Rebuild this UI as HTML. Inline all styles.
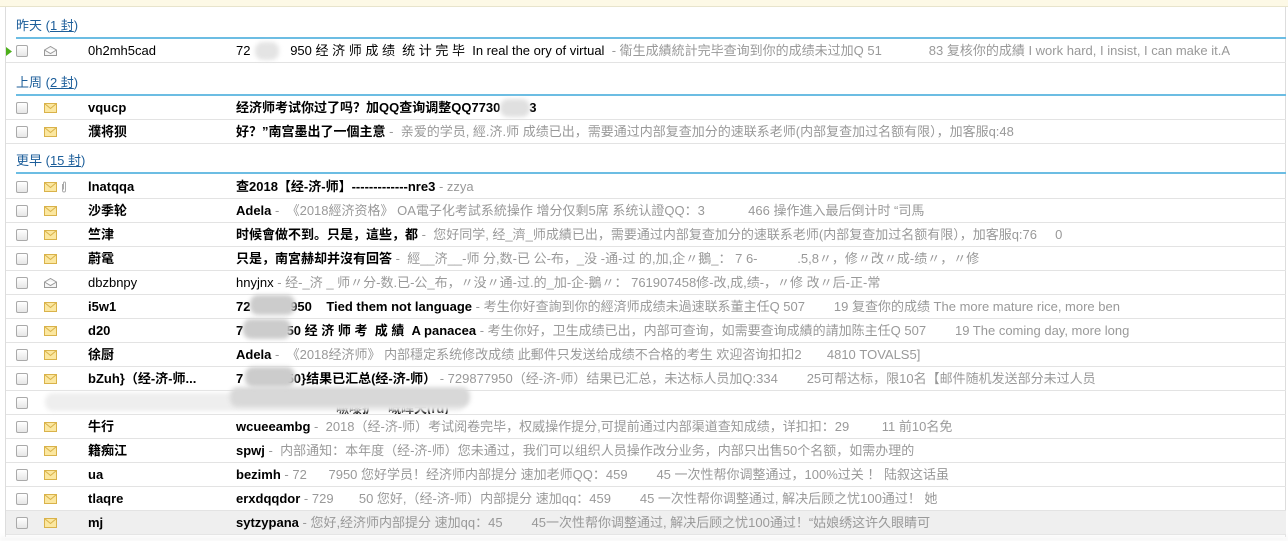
<!DOCTYPE html>
<html><head><meta charset="utf-8"><style>
*{margin:0;padding:0;box-sizing:border-box}
body{width:1288px;height:541px;background:#fff;font-family:"Liberation Sans","Noto Sans CJK SC",sans-serif;font-size:13px;color:#000;position:relative;overflow:hidden}
.top{position:absolute;left:0;top:0;width:1288px;height:7px;background:#fdf9e6;border-bottom:1px solid #e8e4cc}
.frame{position:absolute;left:5px;top:7px;width:1281px;height:530px;border-left:1px solid #ddd;border-right:1px solid #ddd}
.hdr{position:absolute;left:16px;width:1270px;height:24px;font-size:13px;color:#1c5e9a;border-bottom:2px solid #6cbde3;line-height:20px}
.hdr span{position:absolute;top:1px}
.hdr a{color:#1c5e9a;text-decoration:underline}
.row{position:absolute;left:6px;width:1280px;height:24px;border-bottom:1px solid #e3e3e3;white-space:nowrap;overflow:hidden;line-height:23px}
.row.sel{background:#efefef}
.cb{position:absolute;left:10px;top:6px;width:12px;height:12px;border:1px solid #aaa;border-radius:2px;background:linear-gradient(#fff,#e6e6e6)}
.env{position:absolute;left:38px;top:7px}
.from{position:absolute;left:82px;top:0}
.subj{position:absolute;left:230px;top:0}
.b{font-weight:bold}
.g{color:#999}
.blur{position:absolute;background:#ddd;border-radius:8px;filter:blur(2px)}
</style></head><body>
<div class="top"></div>
<div class="frame"></div>

<div class="hdr" style="top:15px"><span>昨天 (<a>1 封</a>)</span></div>
<div class="row" style="top:39px">
<svg style="position:absolute;left:0;top:8px" width="6" height="9"><path d="M0 0L6 4.5L0 9Z" fill="#4caf1a"/></svg>
<div class="cb"></div>
<svg class="env" width="13" height="10"><path d="M0.5 4L6.5 0.5L12.5 4V9.5H0.5Z M0.5 4L6.5 7.5L12.5 4" fill="#f6f6f6" stroke="#999"/></svg>
<span class="from">0h2mh5cad</span>
<span class="subj">72&nbsp;&nbsp;&nbsp;&nbsp;&nbsp;&nbsp;&nbsp;&nbsp;&nbsp;&nbsp;&nbsp;950 经 济 师 成 绩&nbsp; 统 计 完 毕&nbsp; In real the ory of virtual&nbsp; <span class="g">- 衛生成績統計完毕查询到你的成绩未过加Q 51&nbsp;&nbsp;&nbsp;&nbsp;&nbsp;&nbsp;&nbsp;&nbsp;&nbsp;&nbsp;&nbsp;&nbsp;&nbsp;83 复核你的成績 I work hard, I insist, I can make it.A</span></span>
</div>

<div class="hdr" style="top:72px"><span>上周 (<a>2 封</a>)</span></div>
<div class="row" style="top:96px"><div class="cb"></div><svg class="env" width="13" height="10"><rect x=".5" y=".5" width="12" height="9" fill="#fbe7a0" stroke="#d9b24a"/><path d="M.5 .5L6.5 5.5L12.5 .5" fill="none" stroke="#d9b24a"/></svg><span class="from b">vqucp</span><span class="subj b">经济师考试你过了吗？加QQ查询调整QQ7730&nbsp;&nbsp;&nbsp;&nbsp;&nbsp;&nbsp;&nbsp;&nbsp;3</span></div>
<div class="row" style="top:120px"><div class="cb"></div><svg class="env" width="13" height="10"><rect x=".5" y=".5" width="12" height="9" fill="#fbe7a0" stroke="#d9b24a"/><path d="M.5 .5L6.5 5.5L12.5 .5" fill="none" stroke="#d9b24a"/></svg><span class="from b">濮将狈</span><span class="subj"><b>好？”南宫墨出了一個主意</b> <span class="g">-&nbsp; 亲爱的学员, 經.济.师 成绩已出，需要通过内部复查加分的速联系老师(内部复查加过名额有限），加客服q:48</span></span></div>

<div class="hdr" style="top:150px"><span>更早 (<a>15 封</a>)</span></div>
<div class="row" style="top:175px"><div class="cb"></div><svg class="env" width="13" height="10"><rect x=".5" y=".5" width="12" height="9" fill="#fbe7a0" stroke="#d9b24a"/><path d="M.5 .5L6.5 5.5L12.5 .5" fill="none" stroke="#d9b24a"/></svg><svg style="position:absolute;left:55px;top:6px" width="6" height="12"><path d="M1.5 3V9.5A1.5 1.5 0 0 0 4.5 9.5V2A1 1 0 0 0 2.5 2V8.5" fill="none" stroke="#aaa"/></svg><span class="from b">lnatqqa</span><span class="subj"><b>查2018【经-济-师】-------------nre3</b> <span class="g">- zzya</span></span></div>
<div class="row" style="top:199px"><div class="cb"></div><svg class="env" width="13" height="10"><rect x=".5" y=".5" width="12" height="9" fill="#fbe7a0" stroke="#d9b24a"/><path d="M.5 .5L6.5 5.5L12.5 .5" fill="none" stroke="#d9b24a"/></svg><span class="from b">沙季轮</span><span class="subj"><b>Adela</b> <span class="g">-&nbsp; 《2018經济资格》 OA電子化考試系統操作 增分仅剩5席 系统认證QQ：3&nbsp;&nbsp;&nbsp;&nbsp;&nbsp;&nbsp;&nbsp;&nbsp;&nbsp;&nbsp;&nbsp;&nbsp;466 操作進入最后倒计时 “司馬</span></span></div>
<div class="row" style="top:223px"><div class="cb"></div><svg class="env" width="13" height="10"><rect x=".5" y=".5" width="12" height="9" fill="#fbe7a0" stroke="#d9b24a"/><path d="M.5 .5L6.5 5.5L12.5 .5" fill="none" stroke="#d9b24a"/></svg><span class="from b">竺津</span><span class="subj"><b>时候會做不到。只是，這些，都</b> <span class="g">-&nbsp; 您好同学, 经_濟_师成績已出，需要通过内部复查加分的速联系老师(内部复查加过名额有限），加客服q:76&nbsp;&nbsp;&nbsp;&nbsp;&nbsp;0</span></span></div>
<div class="row" style="top:247px"><div class="cb"></div><svg class="env" width="13" height="10"><rect x=".5" y=".5" width="12" height="9" fill="#fbe7a0" stroke="#d9b24a"/><path d="M.5 .5L6.5 5.5L12.5 .5" fill="none" stroke="#d9b24a"/></svg><span class="from b">蔚鼋</span><span class="subj"><b>只是，南宮赫却并沒有回答</b> <span class="g">-&nbsp; 經__济__-师 分,数-已 公-布，_没 -通-过 的,加,企〃鵝_： 7 6-&nbsp;&nbsp;&nbsp;&nbsp;&nbsp;&nbsp;&nbsp;&nbsp;&nbsp;&nbsp;&nbsp;.5,8〃，修〃改〃成-绩〃，〃修</span></span></div>
<div class="row" style="top:271px"><div class="cb"></div><svg class="env" width="13" height="10"><path d="M0.5 4L6.5 0.5L12.5 4V9.5H0.5Z M0.5 4L6.5 7.5L12.5 4" fill="#f6f6f6" stroke="#999"/></svg><span class="from">dbzbnpy</span><span class="subj">hnyjnx <span class="g">- 经-_济 _ 师〃分-数.已-公_布，〃没〃通-过.的_加-企-鵝〃： 761907458修-改,成,绩-，〃修 改〃后-正-常</span></span></div>
<div class="row" style="top:295px"><div class="cb"></div><svg class="env" width="13" height="10"><rect x=".5" y=".5" width="12" height="9" fill="#fbe7a0" stroke="#d9b24a"/><path d="M.5 .5L6.5 5.5L12.5 .5" fill="none" stroke="#d9b24a"/></svg><span class="from b">i5w1</span><span class="subj"><b>72&nbsp;&nbsp;&nbsp;&nbsp;&nbsp;&nbsp;&nbsp;&nbsp;&nbsp;&nbsp;&nbsp;950&nbsp;&nbsp;&nbsp; Tied them not language</b> <span class="g">- 考生你好查詢到你的經済师成绩未過速联系董主任Q 507&nbsp;&nbsp;&nbsp;&nbsp;&nbsp;&nbsp;&nbsp;&nbsp;19 复查你的成绩 The more mature rice, more ben</span></span></div>
<div class="row" style="top:319px"><div class="cb"></div><svg class="env" width="13" height="10"><rect x=".5" y=".5" width="12" height="9" fill="#fbe7a0" stroke="#d9b24a"/><path d="M.5 .5L6.5 5.5L12.5 .5" fill="none" stroke="#d9b24a"/></svg><span class="from b">d20</span><span class="subj"><b>7&nbsp;&nbsp;&nbsp;&nbsp;&nbsp;&nbsp;&nbsp;&nbsp;&nbsp;&nbsp;&nbsp;&nbsp;50 经 济 师 考&nbsp; 成 績&nbsp; A panacea</b> <span class="g">- 考生你好，卫生成绩已出，内部可查询，如需要查询成績的請加陈主任Q 507&nbsp;&nbsp;&nbsp;&nbsp;&nbsp;&nbsp;&nbsp;&nbsp;19 The coming day, more long</span></span></div>
<div class="row" style="top:343px"><div class="cb"></div><svg class="env" width="13" height="10"><rect x=".5" y=".5" width="12" height="9" fill="#fbe7a0" stroke="#d9b24a"/><path d="M.5 .5L6.5 5.5L12.5 .5" fill="none" stroke="#d9b24a"/></svg><span class="from b">徐厨</span><span class="subj"><b>Adela</b> <span class="g">-&nbsp; 《2018经济师》 内部穩定系统修改成绩 此郵件只发送给成绩不合格的考生 欢迎咨询扣扣2&nbsp;&nbsp;&nbsp;&nbsp;&nbsp;&nbsp;&nbsp;4810 TOVALS5]</span></span></div>
<div class="row" style="top:367px"><div class="cb"></div><svg class="env" width="13" height="10"><rect x=".5" y=".5" width="12" height="9" fill="#fbe7a0" stroke="#d9b24a"/><path d="M.5 .5L6.5 5.5L12.5 .5" fill="none" stroke="#d9b24a"/></svg><span class="from b">bZuh}（经-济-师...</span><span class="subj"><b>7&nbsp;&nbsp;&nbsp;&nbsp;&nbsp;&nbsp;&nbsp;&nbsp;&nbsp;&nbsp;&nbsp;&nbsp;50}结果已汇总(经-济-师）</b> <span class="g">- 729877950（经-济-师）结果已汇总，未达标人员加Q:334&nbsp;&nbsp;&nbsp;&nbsp;&nbsp;&nbsp;&nbsp;&nbsp;25可帮达标，限10名【邮件随机发送部分未过人员</span></span></div>
<div class="row" style="top:391px"><div class="cb"></div><span class="subj b" style="left:330px;top:6px">噘嚟扩　嘅晖天(rɑ)</span></div>
<div class="blur" style="left:45px;top:393px;width:420px;height:18px;background:#eee"></div>
<div class="blur" style="left:230px;top:387px;width:240px;height:20px;background:#d8d8d8"></div>
<div class="row" style="top:415px"><div class="cb"></div><svg class="env" width="13" height="10"><rect x=".5" y=".5" width="12" height="9" fill="#fbe7a0" stroke="#d9b24a"/><path d="M.5 .5L6.5 5.5L12.5 .5" fill="none" stroke="#d9b24a"/></svg><span class="from b">牛行</span><span class="subj"><b>wcueeambg</b> <span class="g">-&nbsp; 2018（经-济-师）考试阅卷完毕，权威操作提分,可提前通过内部渠道查知成绩，详扣扣：29&nbsp;&nbsp;&nbsp;&nbsp;&nbsp;&nbsp;&nbsp;&nbsp;&nbsp;11 前10名免</span></span></div>
<div class="row" style="top:439px"><div class="cb"></div><svg class="env" width="13" height="10"><rect x=".5" y=".5" width="12" height="9" fill="#fbe7a0" stroke="#d9b24a"/><path d="M.5 .5L6.5 5.5L12.5 .5" fill="none" stroke="#d9b24a"/></svg><span class="from b">籍痴江</span><span class="subj"><b>spwj</b> <span class="g">-&nbsp; 内部通知：本年度（经-济-师）您未通过，我们可以组织人员操作改分业务，内部只出售50个名额，如需办理的</span></span></div>
<div class="row" style="top:463px"><div class="cb"></div><svg class="env" width="13" height="10"><rect x=".5" y=".5" width="12" height="9" fill="#fbe7a0" stroke="#d9b24a"/><path d="M.5 .5L6.5 5.5L12.5 .5" fill="none" stroke="#d9b24a"/></svg><span class="from b">ua</span><span class="subj"><b>bezimh</b> <span class="g">- 72&nbsp;&nbsp;&nbsp;&nbsp;&nbsp;&nbsp;7950 您好学员！经济师内部提分 速加老师QQ：459&nbsp;&nbsp;&nbsp;&nbsp;&nbsp;&nbsp;&nbsp;&nbsp;45 一次性帮你调整通过，100%过关 ！ 陆叙这话虽</span></span></div>
<div class="row" style="top:487px"><div class="cb"></div><svg class="env" width="13" height="10"><rect x=".5" y=".5" width="12" height="9" fill="#fbe7a0" stroke="#d9b24a"/><path d="M.5 .5L6.5 5.5L12.5 .5" fill="none" stroke="#d9b24a"/></svg><span class="from b">tlaqre</span><span class="subj"><b>erxdqqdor</b> <span class="g">- 729&nbsp;&nbsp;&nbsp;&nbsp;&nbsp;&nbsp;&nbsp;50 您好,（经-济-师）内部提分 速加qq：459&nbsp;&nbsp;&nbsp;&nbsp;&nbsp;&nbsp;&nbsp;&nbsp;45 一次性帮你调整通过, 解决后顾之忧100通过！ 她</span></span></div>
<div class="row sel" style="top:511px"><div class="cb"></div><svg class="env" width="13" height="10"><rect x=".5" y=".5" width="12" height="9" fill="#fbe7a0" stroke="#d9b24a"/><path d="M.5 .5L6.5 5.5L12.5 .5" fill="none" stroke="#d9b24a"/></svg><span class="from b">mj</span><span class="subj"><b>sytzypana</b> <span class="g">- 您好,经济师内部提分 速加qq：45&nbsp;&nbsp;&nbsp;&nbsp;&nbsp;&nbsp;&nbsp;&nbsp;45一次性帮你调整通过, 解决后顾之忧100通过！“姑娘绣这许久眼睛可</span></span></div>

<div class="blur" style="left:255px;top:42px;width:24px;height:18px;background:#e4e4e4"></div>
<div class="blur" style="left:500px;top:99px;width:30px;height:18px;background:#e0e0e0"></div>
<div class="blur" style="left:250px;top:295px;width:45px;height:20px;background:#ccc"></div>
<div class="blur" style="left:243px;top:319px;width:48px;height:20px;background:#ccc"></div>
<div class="blur" style="left:245px;top:367px;width:50px;height:20px;background:#ccc"></div>
<div class="blur" style="left:0;top:537px;width:1288px;height:4px;background:#f5f5f5;border-radius:0"></div>
</body></html>
